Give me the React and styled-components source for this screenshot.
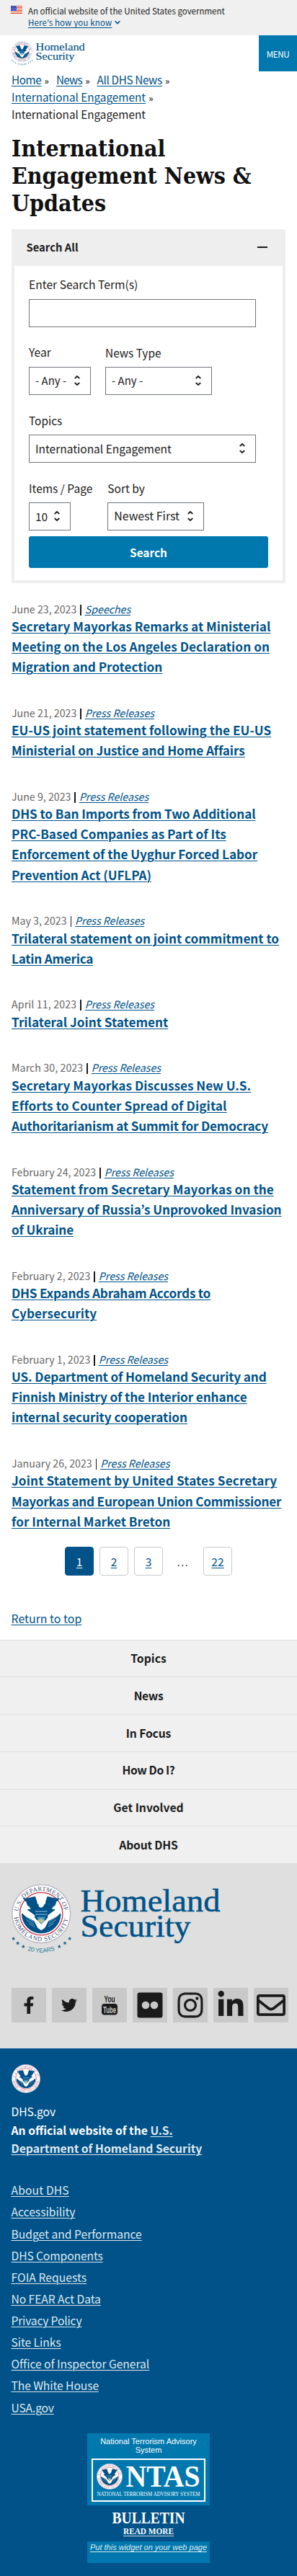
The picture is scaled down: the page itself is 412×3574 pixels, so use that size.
import React, { useId } from 'react';
import styled, { createGlobalStyle } from 'styled-components';
import { FaFacebookF, FaTwitter, FaInstagram, FaLinkedinIn, FaRegEnvelope } from 'react-icons/fa';

const navy = '#005288';
const azure = '#0078ae';
const sans = '"Noto Sans CJK JP", "Noto Sans", sans-serif';
const slab = '"Liberation Serif", serif';

const GlobalStyle = createGlobalStyle`
  *, *::before, *::after { box-sizing: border-box; }
  body {
    margin: 0;
    background: #fff;
    color: #1b1b1b;
    font-family: ${sans};
    font-size: 15.6px;
  }
  a {
    color: ${navy};
    text-decoration: underline;
    text-decoration-thickness: 1px;
    text-underline-offset: 2px;
  }
  svg { display: block; overflow: visible; }
`;

const Tracked = styled.span`
  letter-spacing: ${(p) => p.$ls || 0}px;
`;
const Link = styled.a`
  letter-spacing: ${(p) => p.$ls || 0}px;
`;

/* ---------- brand drawings ---------- */

const eagle = (
  <g>
    <path d="M17 50 A33 33 0 0 0 83 50 L72 42 H28 Z" fill={navy} />
    <path d="M21 39 L45 57 L50 68 L55 57 L79 39 L84 47 L64 67 L57 73 L50 78 L43 73 L36 67 L16 47 Z" fill="#fff" />
    <path d="M17 51 L38 62 L44 74 L36 76 C25 71 19 62 17 51 Z M83 51 L62 62 L56 74 L64 76 C75 71 81 62 83 51 Z" fill={navy} />
    <path d="M23 54 L37 64 M25 60 L38 68 M29 66 L39 72 M77 54 L63 64 M75 60 L62 68 M71 66 L61 72" stroke="#8fb4cf" strokeWidth="1" />
    <path d="M19 23 C27 26 35 20 40 21 L42 27 L44 34 H56 L58 27 L60 21 C65 20 73 26 81 23 C79 27 77 29 75 30 C75 34 73 37 70 38 C68 43 65 45 61 48 V56 C58 61 54 63 50 65 C46 63 42 61 39 56 V48 C35 45 32 43 30 38 C27 37 25 34 25 30 C23 29 21 27 19 23 Z" fill={navy} />
    <path d="M45 32 C45 28 55 27 57 31 C58 34 54 33 54 37 L50 40 L46 38 Z" fill="#fff" />
    <path d="M40 46 H60 M40 51 H60" stroke="#7fb0d4" strokeWidth="1.4" />
    <path d="M43 55 H57 L54 64 L50 67 L46 64 Z" fill="#4a9bc9" />
    <path d="M42 61 L50 58 L57 62 L50 65 Z" fill="#b9c08a" />
  </g>
);

function SealArt({ ring = '#35506e' }) {
  const id = useId();
  return (
    <g>
      <circle cx="50" cy="50" r="49" fill="#fff" stroke="#b8b4c0" strokeWidth="1.6" />
      <circle cx="50" cy="50" r="36" fill="none" stroke="#c8324b" strokeWidth="1.6" />
      {eagle}
      <path id={`${id}t`} d="M11.6 46 A38.6 38.6 0 0 1 88.4 46" fill="none" />
      <path id={`${id}b`} d="M4.4 56 A46 46 0 0 0 95.6 56" fill="none" />
      <text fontFamily={slab} fontSize="10.5" fill={ring}>
        <textPath href={`#${id}t`} textLength="112">U.S. DEPARTMENT OF</textPath>
      </text>
      <text fontFamily={slab} fontSize="10.5" fill={ring}>
        <textPath href={`#${id}b`} textLength="130">HOMELAND SECURITY</textPath>
      </text>
    </g>
  );
}

const SealSvg = styled.svg`
  flex: none;
  width: ${(p) => p.$size}px;
  height: ${(p) => p.$size}px;
`;

const Seal = ({ size, ring }) => (
  <SealSvg $size={size} viewBox="0 0 100 100" aria-label="Department of Homeland Security seal">
    <SealArt ring={ring} />
  </SealSvg>
);

const LogoSvg = styled.svg`
  width: ${(p) => p.$width}px;
  height: auto;
`;

const stars = [[2.7, 75.7], [8.7, 82], [16.3, 86.7], [66.3, 86.7], [74, 82], [80.7, 75.7]];

function Logo({ width }) {
  const id = useId();
  return (
    <LogoSvg $width={width} viewBox="0 0 290 98" aria-label="Homeland Security">
      <g transform="scale(.825)"><SealArt /></g>
      {stars.map(([x, y]) => (
        <path
          key={x}
          transform={`translate(${x} ${y})`}
          d="M0 -2.8 L.8 -.9 L2.7 -.9 L1.2 .4 L1.7 2.4 L0 1.3 L-1.7 2.4 L-1.2 .4 L-2.7 -.9 L-.8 -.9 Z"
          fill="#1f6488"
        />
      ))}
      <path id={id} d="M22 92 Q41.5 98.5 62 91" fill="none" />
      <text fontFamily='"Liberation Sans", sans-serif' fontSize="8.3" fill="#1f7a94">
        <textPath href={`#${id}`} textLength="39">20 YEARS</textPath>
      </text>
      <g fontFamily={slab} fontSize="44" fill={navy} stroke={navy} strokeWidth=".5">
        <text x="95.5" y="37.7" textLength="194" lengthAdjust="spacingAndGlyphs">Homeland</text>
        <text x="95.5" y="73" textLength="153" lengthAdjust="spacingAndGlyphs">Security</text>
      </g>
    </LogoSvg>
  );
}

const Flag = () => (
  <svg width="16" height="11" viewBox="0 0 16 11">
    <rect width="16" height="11" fill="#fff" />
    <path d="M0 .5H16M0 2.5H16M0 4.5H16M0 6.5H16M0 8.5H16M0 10.5H16" stroke="#db3e1f" />
    <rect width="8" height="7" fill="#1e33b1" />
    <path d="M1 1.5H8M0 3.5H8M1 5.5H8" stroke="#fff" strokeWidth=".8" strokeDasharray="1 1" />
  </svg>
);

/* ---------- government banner ---------- */

const Banner = styled.div`
  display: flex;
  gap: 8px;
  height: 49px;
  padding: 7px 15px 0;
  background: #f0f0f0;
  font-size: 11.5px;
  line-height: 16.2px;
  > svg { margin-top: 1px; }
`;
const BannerHow = styled.div`
  display: flex;
  align-items: center;
  gap: 4px;
`;

/* ---------- header ---------- */

const Header = styled.header`
  display: flex;
  justify-content: space-between;
  height: 50px;
  padding-left: 16px;
`;
const HeaderLogo = styled.div`
  padding-top: 8px;
`;
const MenuButton = styled.button`
  width: 53px;
  padding: 0;
  border: 0;
  background: ${azure};
  color: #fff;
  font: 11.7px ${sans};
  letter-spacing: -.4px;
`;

const Breadcrumbs = styled.nav`
  display: grid;
  grid-auto-rows: 24px;
  margin: -1px 0 0 16px;
  font-size: 15.27px;
  line-height: 24px;
`;
const CrumbRow = styled.div`
  display: flex;
  gap: 10px;
`;
const Crumb = styled.span`
  display: flex;
  align-items: baseline;
  gap: 4.5px;
  height: 24px;
  white-space: nowrap;
`;
const Chevrons = styled.span`
  font: 12px/16px "Noto Sans", sans-serif;
`;

const Title = styled.h1`
  margin: 17px 16px 16px;
  font: 700 31.8px/38.2px "DejaVu Serif Condensed", "DejaVu Serif", serif;
  font-stretch: condensed;
  white-space: pre-line;
  color: #111;
`;

/* ---------- search accordion ---------- */

const Card = styled.section`
  margin: 0 16px;
`;
const CardHeader = styled.div`
  display: flex;
  align-items: center;
  justify-content: space-between;
  height: 51px;
  padding: 0 25px 2px 20.5px;
  background: #eee;
  font-size: 14.8px;
  font-weight: 700;
`;
const Minus = styled.span`
  width: 14px;
  height: 2px;
  margin-top: 2px;
  background: #1b1b1b;
`;
const CardBody = styled.div`
  display: flex;
  flex-direction: column;
  gap: 23px;
  height: 440px;
  padding: 14.5px 20px 0;
  border: 4px solid #eee;
  border-top: 0;
`;
const FieldRow = styled.div`
  display: flex;
  gap: ${(p) => p.$gap || 0}px;
`;
const Field = styled.div`
  display: flex;
  flex-direction: column;
  align-items: flex-start;
  gap: 7.5px;
`;
const Label = styled.label`
  font-size: ${(p) => p.$size || 15.65}px;
  line-height: 24px;
  white-space: nowrap;
`;
const Box = styled.div`
  display: flex;
  align-items: center;
  justify-content: space-between;
  width: ${(p) => p.$width}px;
  height: 39.5px;
  padding: 0 14px 1px 8px;
  border: 1px solid #71767a;
  font-size: ${(p) => p.$size || 15.5}px;
  white-space: nowrap;
`;
const SearchButton = styled.button`
  width: 332px;
  height: 44px;
  margin-top: -15px;
  padding: 0;
  border: 0;
  border-radius: 3px;
  background: ${azure};
  color: #fff;
  font: 700 15.4px ${sans};
`;
const UpDown = () => (
  <svg width="8" height="14" viewBox="0 0 8 14" fill="none" stroke="#1b1b1b" strokeWidth="1.7">
    <path d="M.7 4 L4 1 L7.3 4 M.7 10 L4 13 L7.3 10" />
  </svg>
);
const SelectField = ({ label, labelSize, value, width, size }) => (
  <Field>
    <Label $size={labelSize}>{label}</Label>
    <Box $width={width} $size={size}>{value}<UpDown /></Box>
  </Field>
);

/* ---------- news list ---------- */

const NewsList = styled.main`
  display: flex;
  flex-direction: column;
  gap: 40.6px;
  padding: 27px 16px 0;
`;
const Meta = styled.div`
  height: 19.2px;
  font-size: 14.2px;
  line-height: 19.2px;
  color: #666;
`;
const Bar = styled.span`
  display: inline-block;
  width: 1.5px;
  height: 15px;
  margin: 0 5px;
  vertical-align: -3px;
  background: #1b1b1b;
`;
const Headline = styled.h2`
  display: grid;
  grid-auto-rows: 28.16px;
  justify-items: start;
  margin: 0;
  font-size: 17.2px;
  font-weight: 700;
  line-height: 28.16px;
  white-space: nowrap;
`;

/* Each headline line carries its letter-spacing in px. */
const news = [
  ['June 23, 2023', 'Speeches', [['Secretary Mayorkas Remarks at Ministerial', -0.01], ['Meeting on the Los Angeles Declaration on', 0.05], ['Migration and Protection', -0.04]]],
  ['June 21, 2023', 'Press Releases', [['EU-US joint statement following the EU-US', 0.01], ['Ministerial on Justice and Home Affairs', -0.1]]],
  ['June 9, 2023', 'Press Releases', [['DHS to Ban Imports from Two Additional', -0.09], ['PRC-Based Companies as Part of Its', -0.01], ['Enforcement of the Uyghur Forced Labor', -0.05], ['Prevention Act (UFLPA)', -0.09]]],
  ['May 3, 2023', 'Press Releases', [['Trilateral statement on joint commitment to', -0.02], ['Latin America', -0.25]]],
  ['April 11, 2023', 'Press Releases', [['Trilateral Joint Statement', -0.02]], 0.13],
  ['March 30, 2023', 'Press Releases', [['Secretary Mayorkas Discusses New U.S.', 0], ['Efforts to Counter Spread of Digital', 0.1], ['Authoritarianism at Summit for Democracy', -0.2]], 0.07],
  ['February 24, 2023', 'Press Releases', [['Statement from Secretary Mayorkas on the', 0.04], ['Anniversary of Russia’s Unprovoked Invasion', -0.09], ['of Ukraine', -0.16]]],
  ['February 2, 2023', 'Press Releases', [['DHS Expands Abraham Accords to', -0.23], ['Cybersecurity', 0.05]]],
  ['February 1, 2023', 'Press Releases', [['US. Department of Homeland Security and', -0.14], ['Finnish Ministry of the Interior enhance', -0.14], ['internal security cooperation', -0.05]]],
  ['January 26, 2023', 'Press Releases', [['Joint Statement by United States Secretary', 0.11], ['Mayorkas and European Union Commissioner', -0.24], ['for Internal Market Breton', -0.01]]],
];

const Pager = styled.nav`
  display: flex;
  justify-content: center;
  gap: 8px;
  margin-top: 21.4px;
`;
const Page = styled.a`
  display: flex;
  align-items: center;
  justify-content: center;
  width: 40px;
  height: 40px;
  padding-bottom: 1px;
  border: 1px solid ${(p) => (p.$current ? navy : '#c6cace')};
  border-radius: 4px;
  background: ${(p) => (p.$current ? navy : '#fff')};
  color: ${(p) => (p.$current ? '#fff' : navy)};
`;
const Ellipsis = styled.span`
  width: 40px;
  font: 15px/42px "Open Sans", "Noto Sans", sans-serif;
  letter-spacing: 1.6px;
  text-align: center;
`;
const ReturnTop = styled.div`
  height: 86.5px;
  padding: 45.2px 15.5px 0;
  font-size: 15.9px;
  line-height: 26px;
`;

/* ---------- footer ---------- */

const FooterNav = styled.nav`
  display: grid;
  grid-auto-rows: 51.7px;
  background: #f0f0f0;
`;
const FooterNavItem = styled.div`
  display: flex;
  align-items: center;
  justify-content: center;
  padding-bottom: 1px;
  border-top: 1px solid #dfe1e2;
  font-size: 15.7px;
  font-weight: 700;
`;
const GrayFooter = styled.div`
  display: flex;
  flex-direction: column;
  justify-content: space-between;
  height: 257px;
  padding: 29px 12px 36px 16px;
  background: #dfdfdf;
`;
const Socials = styled.div`
  display: flex;
  gap: 8px;
`;
const Social = styled.a`
  display: grid;
  place-items: center;
  width: 48px;
  height: 48px;
  background: #c9c9c9;
  color: #1b1b1b;
`;
const YouTubeMark = () => (
  <svg width="24" height="28" viewBox="0 0 24 28" fill="currentColor">
    <rect x="1" y="12" width="22" height="15.5" rx="4" />
    <g fontFamily='"Liberation Sans", sans-serif' fontWeight="700">
      <text x="4.5" y="10" fontSize="13" textLength="15" lengthAdjust="spacingAndGlyphs">You</text>
      <text x="3" y="24.5" fontSize="13" textLength="18" lengthAdjust="spacingAndGlyphs" fill="#c9c9c9">Tube</text>
    </g>
  </svg>
);
const FlickrMark = () => (
  <svg width="36" height="36" viewBox="0 0 36 36">
    <rect x=".5" y=".5" width="35" height="35" rx="3" fill="currentColor" />
    <circle cx="12" cy="18" r="5.3" fill="#c9c9c9" />
    <circle cx="24" cy="18" r="5.3" fill="#c9c9c9" />
  </svg>
);

const BlueFooter = styled.footer`
  height: 733px;
  padding: 22.5px 15.5px 0;
  background: ${navy};
  color: #fff;
  a { color: #dfe9f0; }
`;
const Agency = styled.div`
  display: grid;
  grid-auto-rows: 25.6px;
  margin-top: 12.8px;
  font-size: 15.7px;
  line-height: 25.6px;
`;
const AgencyName = styled.div`
  font-weight: 700;
`;
const FooterLinks = styled.div`
  display: grid;
  grid-auto-rows: 30.14px;
  justify-items: start;
  align-items: center;
  margin-top: 29.8px;
  font-size: 15.65px;
`;
const footerNav = [['Topics', 0.07], ['News', -0.37], ['In Focus', -0.15], ['How Do I?', -0.4], ['Get Involved', 0], ['About DHS', -0.19]];
const footerLinks = [
  ['About DHS', 0.14], ['Accessibility', -0.01], ['Budget and Performance', 0], ['DHS Components', -0.12],
  ['FOIA Requests', 0.05], ['No FEAR Act Data', -0.07], ['Privacy Policy', -0.19], ['Site Links', -0.08],
  ['Office of Inspector General', -0.04], ['The White House', -0.08], ['USA.gov', -0.16],
];

const Widget = styled.aside`
  display: flex;
  flex-direction: column;
  align-items: center;
  width: 170px;
  height: 180px;
  margin: 21px auto 0;
  background: ${azure};
  font: 11px/12px "Liberation Sans", sans-serif;
  text-align: center;
`;
const WidgetTitle = styled.div`
  width: 150px;
  padding: 5px 0 6px;
`;
const NtasBox = styled.div`
  width: 158px;
  height: 60px;
  border: 2px solid #fff;
`;
const Bulletin = styled.div`
  width: 100%;
  height: 50px;
  margin-top: 5px;
  background: ${navy};
`;
const WidgetLink = styled.a`
  margin-top: 2px;
  font-style: italic;
  white-space: nowrap;
`;

export default function App() {
  return (
    <>
      <GlobalStyle />
      <Banner>
        <Flag />
        <div>
          <div>An official website of the United States government</div>
          <BannerHow>
            <Link $ls={0.15}>Here’s how you know</Link>
            <svg width="8" height="6" viewBox="0 0 8 6" fill="none" stroke={navy} strokeWidth="1.6"><path d="M.7 1.2 L4 4.5 L7.3 1.2" /></svg>
          </BannerHow>
        </div>
      </Banner>
      <Header>
        <HeaderLogo><Logo width={102} /></HeaderLogo>
        <MenuButton>MENU</MenuButton>
      </Header>
      <Breadcrumbs>
        <CrumbRow>
          <Crumb><Link $ls={-0.41}>Home</Link><Chevrons>»</Chevrons></Crumb>
          <Crumb><Link $ls={-0.74}>News</Link><Chevrons>»</Chevrons></Crumb>
          <Crumb><Link $ls={-0.35}>All DHS News</Link><Chevrons>»</Chevrons></Crumb>
        </CrumbRow>
        <Crumb><Link>International Engagement</Link><Chevrons>»</Chevrons></Crumb>
        <Crumb>International Engagement</Crumb>
      </Breadcrumbs>
      <Title>{'International\nEngagement News &\nUpdates'}</Title>

      <Card>
        <CardHeader>Search All<Minus /></CardHeader>
        <CardBody>
          <Field>
            <Label>Enter Search Term(s)</Label>
            <Box $width={315} />
          </Field>
          <FieldRow $gap={20}>
            <SelectField label="Year" value="- Any -" width={86} size={15} />
            <SelectField label="News Type" labelSize={15.4} value="- Any -" width={148} size={15} />
          </FieldRow>
          <SelectField label="Topics" labelSize={15.4} value="International Engagement" width={315} />
          <FieldRow $gap={21}>
            <SelectField label="Items / Page" labelSize={15.5} value="10" width={58} />
            <SelectField label="Sort by" labelSize={15.5} value="Newest First" width={134} size={15.9} />
          </FieldRow>
          <SearchButton>Search</SearchButton>
        </CardBody>
      </Card>

      <NewsList>
        {news.map(([date, kind, lines, ls]) => (
          <article key={date}>
            <Meta><Tracked $ls={ls}>{date}</Tracked><Bar /><a><em>{kind}</em></a></Meta>
            <Headline>
              {lines.map(([text, spacing]) => <Link key={text} $ls={spacing}>{text}</Link>)}
            </Headline>
          </article>
        ))}
      </NewsList>
      <Pager>
        <Page $current>1</Page>
        <Page>2</Page>
        <Page>3</Page>
        <Ellipsis>...</Ellipsis>
        <Page>22</Page>
      </Pager>
      <ReturnTop><a>Return to top</a></ReturnTop>

      <FooterNav>
        {footerNav.map(([t, ls]) => (
          <FooterNavItem key={t}><Tracked $ls={ls}>{t}</Tracked></FooterNavItem>
        ))}
      </FooterNav>
      <GrayFooter>
        <Logo width={290} />
        <Socials>
          <Social><FaFacebookF size={24} /></Social>
          <Social><FaTwitter size={22} /></Social>
          <Social><YouTubeMark /></Social>
          <Social><FlickrMark /></Social>
          <Social><FaInstagram size={40} /></Social>
          <Social><FaLinkedinIn size={40} /></Social>
          <Social><FaRegEnvelope size={40} /></Social>
        </Socials>
      </GrayFooter>
      <BlueFooter>
        <Seal size={40} ring="#a8607c" />
        <Agency>
          <Tracked $ls={-0.1}>DHS.gov</Tracked>
          <AgencyName>An official website of the <a>U.S.</a></AgencyName>
          <AgencyName><a>Department of Homeland Security</a></AgencyName>
        </Agency>
        <FooterLinks>
          {footerLinks.map(([t, ls]) => <Link key={t} $ls={ls}>{t}</Link>)}
        </FooterLinks>
        <Widget>
          <WidgetTitle>National Terrorism Advisory System</WidgetTitle>
          <NtasBox>
            <svg width="154" height="56" viewBox="0 0 154 56" fill="#fff" fontFamily={slab}>
              <g transform="translate(5 5) scale(.36)"><SealArt ring="#a8607c" /></g>
              <text x="45.5" y="36.5" fontSize="42" fontWeight="700" textLength="103" lengthAdjust="spacingAndGlyphs">NTAS</text>
              <text x="5.5" y="49.7" fontSize="8" textLength="143" lengthAdjust="spacingAndGlyphs">NATIONAL TERRORISM ADVISORY SYSTEM</text>
            </svg>
          </NtasBox>
          <Bulletin>
            <svg width="170" height="50" viewBox="0 0 170 50" fill="#fff" fontFamily={slab} fontWeight="700">
              <text x="34.5" y="25" fontSize="23" textLength="101" lengthAdjust="spacingAndGlyphs">BULLETIN</text>
              <text x="50" y="39.7" fontSize="13" textLength="70" lengthAdjust="spacingAndGlyphs">READ MORE</text>
              <path d="M50 42.5 H120" stroke="#fff" strokeWidth=".8" />
            </svg>
          </Bulletin>
          <WidgetLink>Put this widget on your web page</WidgetLink>
        </Widget>
      </BlueFooter>
    </>
  );
}
